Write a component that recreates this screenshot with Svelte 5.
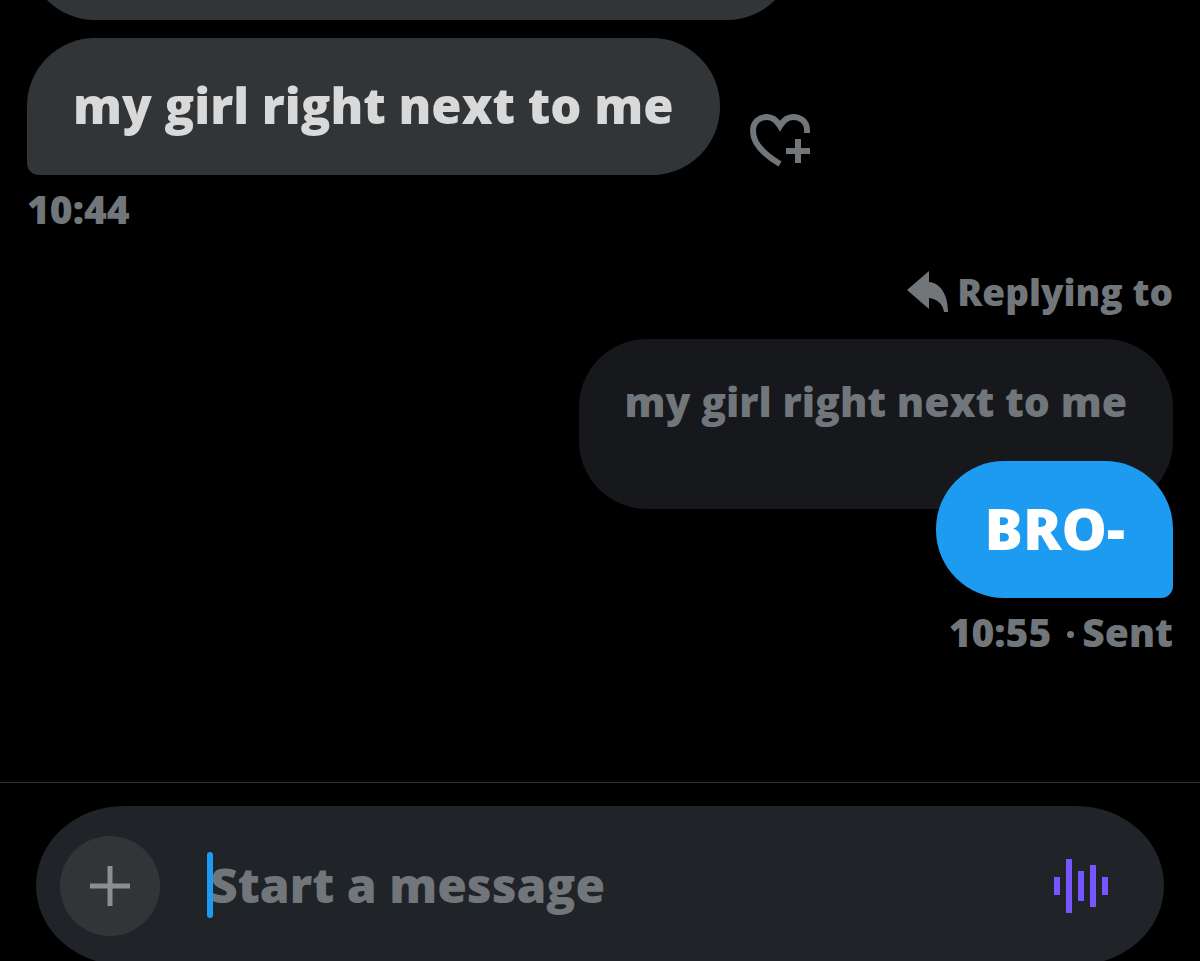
<script lang="ts">
  let draft = $state("");

  const received = { text: "my girl right next to me", time: "10:44" };
  const sent = { text: "BRO-", time: "10:55", status: "Sent" };

  // x offset and height of every bar in the voice icon
  const bars = [
    { x: 0, h: 18 },
    { x: 12, h: 54 },
    { x: 24, h: 30 },
    { x: 36, h: 42 },
    { x: 48, h: 18 },
  ];
</script>

<div class="chat">
  <main class="thread">
    <div class="bubble previous"></div>

    <div class="received">
      <div class="row">
        <p class="bubble incoming">{received.text}</p>
        <button class="react" aria-label="Add reaction">
          <svg width="60" height="54" viewBox="0 0 60 54" fill="none" stroke="currentColor" stroke-width="6">
            <path d="M57 20v-3C57 8 50 4 43 4c-6 0-10 4-13 9C27 8 23 4 17 4 9 4 3 9 3 18c0 12 10 23 27 33" />
            <path d="M36 38h24M48 26v24" />
          </svg>
        </button>
      </div>
      <time class="meta">{received.time}</time>
    </div>

    <div class="sent">
      <div class="replying">
        <svg width="42" height="42" viewBox="0 0 42 42" fill="currentColor" aria-hidden="true">
          <path d="M22 0v11c11 1 19 12 19 30h-4c-1-8-7-13-15-14v11L0 19z" />
        </svg>
        <span>Replying to</span>
      </div>
      <blockquote class="quoted">{received.text}</blockquote>
      <p class="bubble outgoing">{sent.text}</p>
      <div class="meta">
        <time>{sent.time}</time>
        <span class="dot"></span>
        <span>{sent.status}</span>
      </div>
    </div>
  </main>

  <footer class="footer">
    <form class="composer" onsubmit={(e) => e.preventDefault()}>
      <button class="add" type="button" aria-label="Add attachment">
        <svg width="40" height="40" viewBox="0 0 40 40" stroke="currentColor" stroke-width="5">
          <path d="M0 20h40M20 0v40" />
        </svg>
      </button>
      <div class="field">
        <input type="text" placeholder="Start a message" aria-label="Start a message" bind:value={draft} />
      </div>
      <button class="voice" type="button" aria-label="Record voice message">
        <svg width="54" height="54" viewBox="0 0 54 54" fill="currentColor">
          {#each bars as bar}
            <rect x={bar.x} y={27 - bar.h / 2} width="6" height={bar.h} />
          {/each}
        </svg>
      </button>
    </form>
  </footer>
</div>

<style>
  :global(body) {
    margin: 0;
    background: #000;
  }

  .chat {
    display: flex;
    flex-direction: column;
    height: 100vh;
    overflow: hidden;
    font-family: "Open Sans", "Noto Sans", sans-serif;
    font-weight: 800;
    color: #71767b;
    background: #000;
  }

  button {
    display: flex;
    align-items: center;
    justify-content: center;
    padding: 0;
    border: 0;
    background: none;
    color: inherit;
    cursor: pointer;
  }

  svg {
    display: block;
  }

  p,
  blockquote {
    margin: 0;
  }

  .thread {
    flex: 1;
    display: flex;
    flex-direction: column;
    padding: 0 27px;
  }

  .bubble {
    box-sizing: border-box;
    min-height: 137px;
    padding: 31px 46px 34px;
    border-radius: 68px;
    font-size: 49px;
    line-height: 72px;
  }

  /* older message, scrolled mostly out of view */
  .previous {
    width: 67%;
    margin-top: -117px;
    background: #323538;
    flex-shrink: 0;
  }

  .received {
    display: flex;
    flex-direction: column;
    align-items: flex-start;
    margin-top: 18px;
  }

  .row {
    display: flex;
    align-items: flex-end;
    gap: 30px;
  }

  .incoming {
    background: #323538;
    border-bottom-left-radius: 12px;
    color: #d9d9d9;
  }

  .react {
    margin-bottom: 8px;
  }

  .meta {
    display: flex;
    align-items: center;
    margin-top: 7px;
    font-size: 39px;
    line-height: 54px;
  }

  .dot {
    width: 7px;
    height: 7px;
    margin: 4px 8px 0 16px;
    border-radius: 50%;
    background: currentColor;
  }

  .sent {
    display: flex;
    flex-direction: column;
    align-items: flex-end;
    margin-top: 29px;
  }

  .replying {
    display: flex;
    align-items: center;
    gap: 8px;
    font-size: 37px;
    line-height: 54px;
  }

  .quoted {
    padding: 32px 46px 78px;
    border-radius: 68px;
    background: #16181c;
    margin-top: 20px;
    font-size: 41px;
    line-height: 60px;
  }

  .outgoing {
    position: relative;
    margin-top: -48px;
    padding: 31px 48px 34px;
    background: #1d9bf0;
    border-bottom-right-radius: 12px;
    color: #fff;
    font-size: 57px;
  }

  .footer {
    flex-shrink: 0;
    margin-bottom: -4px;
    padding: 23px 36px 0;
    border-top: 1px solid #2f3336;
  }

  .composer {
    display: flex;
    align-items: center;
    box-sizing: border-box;
    height: 159px;
    padding: 0 56px 0 24px;
    border-radius: 88px / 80px;
    background: #202327;
  }

  .add {
    width: 100px;
    height: 100px;
    border-radius: 50%;
    background: #323538;
    color: #8e8d92;
  }

  .field {
    position: relative;
    flex: 1;
    margin-left: 47px;
  }

  /* text caret */
  .field::before {
    content: "";
    position: absolute;
    top: 2px;
    bottom: 4px;
    left: 0;
    width: 6px;
    border-radius: 3px;
    background: #1d9bf0;
  }

  input {
    box-sizing: border-box;
    display: block;
    width: 100%;
    height: 72px;
    padding: 0 0 2px 3px;
    border: 0;
    outline: none;
    background: none;
    color: #d9d9d9;
    caret-color: #1d9bf0;
    font: inherit;
    font-size: 48px;
  }

  input::placeholder {
    color: #71767b;
    opacity: 1;
  }

  .voice {
    color: #7856ff;
  }
</style>
